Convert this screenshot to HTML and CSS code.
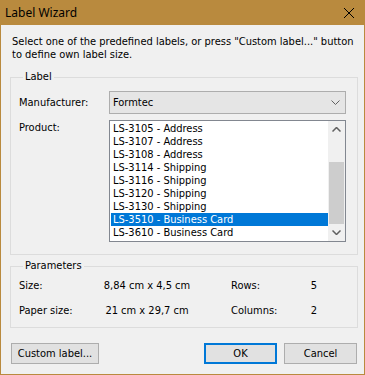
FILE: index.html
```html
<!DOCTYPE html>
<html lang="en">
<head>
    <meta charset="UTF-8">
    <title>Label Wizard</title>
    <link rel="stylesheet" href="styles.css">
</head>
<body>
    <div class="window">
        <div class="titlebar">
            <span class="title">Label Wizard</span>
            <svg class="close" width="12" height="12" viewBox="0 0 12 12">
                <path d="M1 1 L11 11 M11 1 L1 11" stroke="#000" stroke-width="1" fill="none"/>
            </svg>
        </div>
        <div class="content">
            <p class="intro">Select one of the predefined labels, or press "Custom label..." button to define own label size.</p>

            <fieldset class="group label-group">
                <legend>Label</legend>
                <div class="row">
                    <span class="field-label">Manufacturer:</span>
                    <div class="combo">
                        <span>Formtec</span>
                        <svg width="9" height="5" viewBox="0 0 9 5">
                            <path d="M0.5 0.5 L4.5 4.5 L8.5 0.5" stroke="#606060" fill="none"/>
                        </svg>
                    </div>
                </div>
                <div class="row row-top">
                    <span class="field-label product">Product:</span>
                    <div class="listbox">
                        <ul class="items">
                            <li>LS-3105 - Address</li>
                            <li>LS-3107 - Address</li>
                            <li>LS-3108 - Address</li>
                            <li>LS-3114 - Shipping</li>
                            <li>LS-3116 - Shipping</li>
                            <li>LS-3120 - Shipping</li>
                            <li>LS-3130 - Shipping</li>
                            <li class="selected">LS-3510 - Business Card</li>
                            <li>LS-3610 - Business Card</li>
                        </ul>
                        <div class="scrollbar">
                            <div class="arrow">
                                <svg width="9" height="5" viewBox="0 0 9 5">
                                    <path d="M0.5 4.5 L4.5 0.5 L8.5 4.5" stroke="#606060" stroke-width="1.5" fill="none"/>
                                </svg>
                            </div>
                            <div class="track"><div class="thumb"></div></div>
                            <div class="arrow">
                                <svg width="9" height="5" viewBox="0 0 9 5">
                                    <path d="M0.5 0.5 L4.5 4.5 L8.5 0.5" stroke="#606060" stroke-width="1.5" fill="none"/>
                                </svg>
                            </div>
                        </div>
                    </div>
                </div>
            </fieldset>

            <fieldset class="group params">
                <legend>Parameters</legend>
                <div class="param-grid">
                    <span>Size:</span>
                    <span class="value">8,84 cm x 4,5 cm</span>
                    <span class="key-right">Rows:</span>
                    <span class="count">5</span>
                    <span>Paper size:</span>
                    <span class="value">21 cm x 29,7 cm</span>
                    <span class="key-right">Columns:</span>
                    <span class="count">2</span>
                </div>
            </fieldset>

            <div class="buttons">
                <button class="btn custom">Custom label...</button>
                <div class="right-buttons">
                    <button class="btn default">OK</button>
                    <button class="btn">Cancel</button>
                </div>
            </div>
        </div>
    </div>
</body>
</html>
```

FILE: styles.css
```css
body {
    margin: 0;
    font-family: "DejaVu Sans Condensed", "Liberation Sans", sans-serif;
    font-size: 11px;
    color: #000;
    background-color: #f0f0f0;
}

.window {
    width: 365px;
    height: 375px;
    box-sizing: border-box;
    border: 1px solid #b98a3e;
    border-top: none;
    background-color: #f0f0f0;
    display: flex;
    flex-direction: column;
}

.titlebar {
    height: 25px;
    margin: 0 -1px;
    background-color: #b98a3e;
    display: flex;
    align-items: center;
    justify-content: space-between;
    padding: 0 10px 0 5px;
}

.title {
    font-family: "Noto Sans", sans-serif;
    font-size: 12px;
}

.close {
    display: block;
}

.content {
    padding: 10px 6px 0 9px;
}

.intro {
    margin: 0 0 8px 2px;
    line-height: 13px;
}

.group {
    width: 348px;
    box-sizing: border-box;
    margin: 0;
    border: 1px solid #dcdcdc;
    padding: 6px 11px 6px 8px;
}

.group legend {
    padding: 0 2px;
    margin-left: 4px;
    line-height: 16px;
}

.row {
    display: flex;
    align-items: center;
    margin-bottom: 6px;
}

.row-top {
    align-items: flex-start;
    margin-bottom: 6px;
}

.field-label {
    width: 90px;
}

.product {
    padding-top: 1px;
}

.combo {
    width: 237px;
    height: 23px;
    box-sizing: border-box;
    background-color: #e5e5e5;
    border: 1px solid #adadad;
    display: flex;
    align-items: center;
    justify-content: space-between;
    padding: 0 5px 0 3px;
}

.combo svg {
    display: block;
}

.listbox {
    width: 237px;
    height: 122px;
    box-sizing: border-box;
    border: 1px solid #828790;
    background-color: #fff;
    display: flex;
    padding: 1px 0 0 1px;
}

.items {
    list-style: none;
    margin: 0;
    padding: 0;
    flex: 1;
}

.items li {
    height: 13px;
    line-height: 13px;
    padding-left: 2px;
}

.items li.selected {
    background-color: #0078d7;
    color: #fff;
}

.scrollbar {
    width: 17px;
    margin-top: -1px;
    background-color: #f0f0f0;
    display: flex;
    flex-direction: column;
}

.arrow {
    height: 17px;
    display: flex;
    align-items: center;
    justify-content: center;
}

.track {
    flex: 1;
    display: flex;
    flex-direction: column;
    justify-content: flex-end;
    padding: 0 1px;
}

.thumb {
    height: 62px;
    background-color: #cdcdcd;
}

.params {
    margin-top: 3px;
    padding: 5px 8px 10px 8px;
}

.param-grid {
    display: grid;
    grid-template-columns: 83px 90px 116px 9px;
    row-gap: 12px;
    line-height: 13px;
    white-space: nowrap;
}

.value {
    text-align: center;
}

.key-right {
    padding-left: 39px;
}

.count {
    text-align: right;
}

.buttons {
    display: flex;
    justify-content: space-between;
    margin-top: 15px;
    width: 346px;
    padding-left: 1px;
}

.right-buttons {
    display: flex;
    gap: 7px;
}

.btn {
    font-family: inherit;
    font-size: 11px;
    height: 21px;
    width: 73px;
    background-color: #e1e1e1;
    border: 1px solid #adadad;
    padding: 0;
    color: #000;
}

.btn.custom {
    width: 88px;
}

.btn.default {
    border: 2px solid #0078d7;
}
```
